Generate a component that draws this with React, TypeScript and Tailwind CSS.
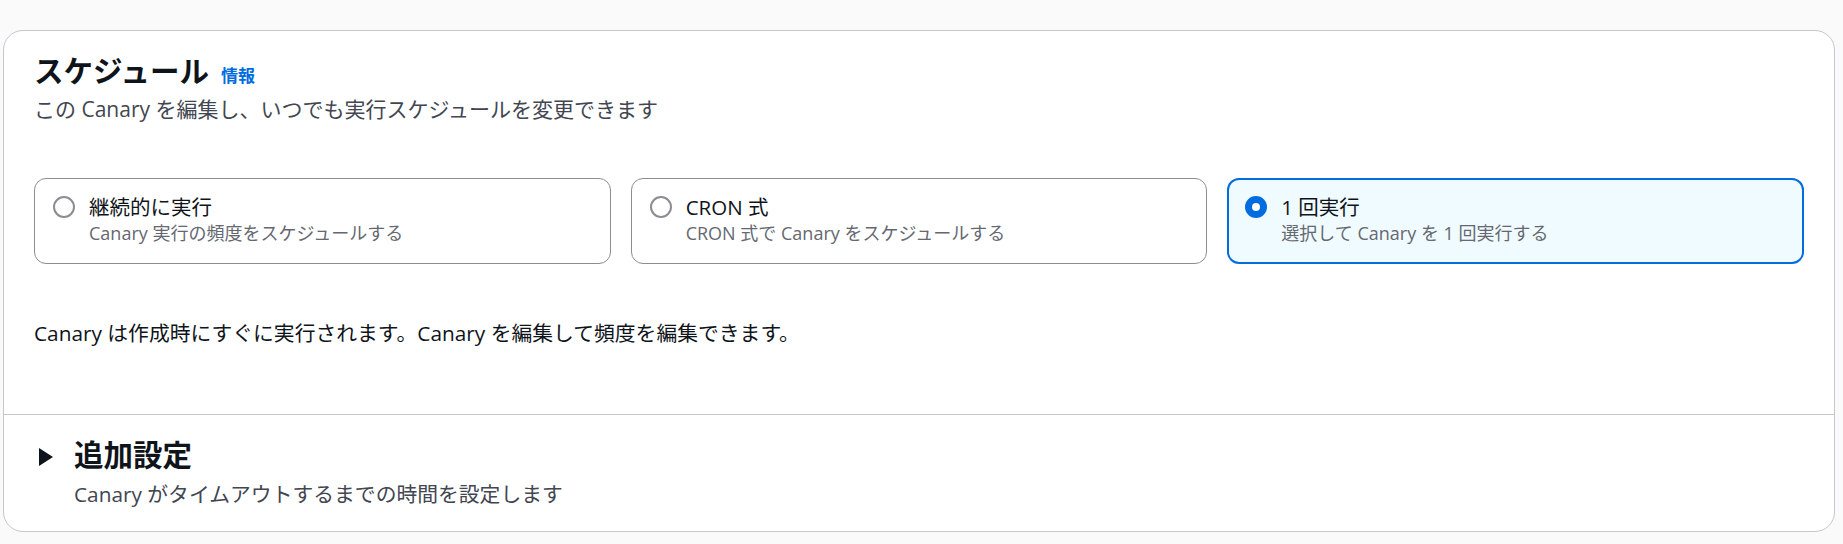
import React, { useState } from "react";

type Option = {
    id: string;
    title: string;
    description: string;
};

const options: Option[] = [
    { id: "rate", title: "継続的に実行", description: "Canary 実行の頻度をスケジュールする" },
    { id: "cron", title: "CRON 式", description: "CRON 式で Canary をスケジュールする" },
    { id: "once", title: "1 回実行", description: "選択して Canary を 1 回実行する" },
];

function Radio({ checked }: { checked: boolean }) {
    return checked ? (
        <span className="mt-[3px] block w-[22px] h-[22px] shrink-0 rounded-full border-[7px] border-[#006ce0] bg-white" />
    ) : (
        <span className="mt-[3px] block w-[22px] h-[22px] shrink-0 rounded-full border-2 border-[#8c8c94] bg-white" />
    );
}

function Tile({ option, checked, onSelect }: { option: Option; checked: boolean; onSelect: () => void }) {
    return (
        <div
            onClick={onSelect}
            className={`flex gap-[14px] rounded-[12px] cursor-pointer ${
                checked
                    ? "border-2 border-[#006ce0] bg-[#f0fbff] pl-[16px] pr-4 pt-[13px] pb-[17px]"
                    : "border border-[#8c8c94] bg-white pl-[18px] pr-4 pt-[14px] pb-[18px]"
            }`}
        >
            <Radio checked={checked} />
            <div className="flex flex-col">
                <span className="text-[20.5px] leading-[28px] text-[#0f141a]">{option.title}</span>
                <span className="text-[18px] leading-[24px] text-[#656871]">{option.description}</span>
            </div>
        </div>
    );
}

export default function App() {
    const [selected, setSelected] = useState<string>("once");

    return (
        <div
            className="min-h-[544px] bg-[#fafafa] pt-[30px] pl-[3px] pr-[8px]"
            style={{ fontFamily: '"Open Sans", "Noto Sans CJK JP", sans-serif' }}
        >
            <section className="rounded-[20px] border border-[#c6c6cd] bg-white">
                <div className="px-[30px] pt-[20px] pb-[67px]">
                    <div className="flex items-baseline gap-[12px]">
                        <h2 className="text-[29.5px] leading-[40px] font-bold text-[#0f141a]">スケジュール</h2>
                        <a className="text-[17px] font-bold text-[#006ce0] cursor-pointer">情報</a>
                    </div>
                    <p className="mt-[4px] text-[21px] leading-[28px] text-[#424650]">
                        この Canary を編集し、いつでも実行スケジュールを変更できます
                    </p>

                    <div className="mt-[55px] grid grid-cols-3 gap-[20px]">
                        {options.map((o) => (
                            <Tile key={o.id} option={o} checked={selected === o.id} onSelect={() => setSelected(o.id)} />
                        ))}
                    </div>

                    <p className="mt-[55px] text-[20.8px] leading-[28px] text-[#0f141a]">
                        Canary は作成時にすぐに実行されます。Canary を編集して頻度を編集できます。
                    </p>
                </div>

                <div className="border-t border-[#c6c6cd] pl-[34px] pr-[30px] pt-[20px] pb-[23px]">
                    <div className="flex items-center gap-[20px]">
                        <svg width="16" height="20" viewBox="0 0 16 20" className="shrink-0 mt-[3px]">
                            <path d="M1 1 L15 10 L1 19 Z" fill="#0f141a" />
                        </svg>
                        <h3 className="text-[29.5px] leading-[40px] font-bold text-[#0f141a]">追加設定</h3>
                    </div>
                    <p className="mt-[5px] pl-[36px] text-[20.8px] leading-[28px] text-[#424650]">
                        Canary がタイムアウトするまでの時間を設定します
                    </p>
                </div>
            </section>
        </div>
    );
}
